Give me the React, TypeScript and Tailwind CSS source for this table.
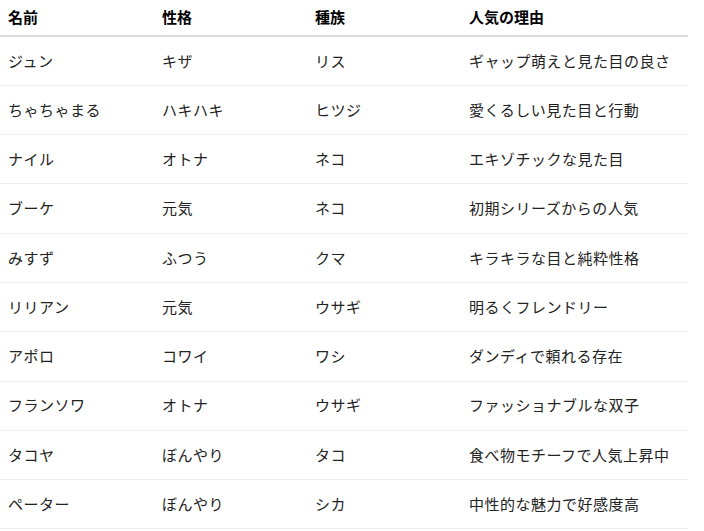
const rows = [
  ["ジュン", "キザ", "リス", "ギャップ萌えと見た目の良さ"],
  ["ちゃちゃまる", "ハキハキ", "ヒツジ", "愛くるしい見た目と行動"],
  ["ナイル", "オトナ", "ネコ", "エキゾチックな見た目"],
  ["ブーケ", "元気", "ネコ", "初期シリーズからの人気"],
  ["みすず", "ふつう", "クマ", "キラキラな目と純粋性格"],
  ["リリアン", "元気", "ウサギ", "明るくフレンドリー"],
  ["アポロ", "コワイ", "ワシ", "ダンディで頼れる存在"],
  ["フランソワ", "オトナ", "ウサギ", "ファッショナブルな双子"],
  ["タコヤ", "ぼんやり", "タコ", "食べ物モチーフで人気上昇中"],
  ["ペーター", "ぼんやり", "シカ", "中性的な魅力で好感度高"],
];

const headers = ["名前", "性格", "種族", "人気の理由"];

export default function App() {
  return (
    <div className="min-h-screen bg-white font-['Noto_Sans_CJK_JP',sans-serif] text-[#222]">
      <table className="w-[688px] table-fixed border-collapse text-left">
        <colgroup>
          <col className="w-[154px]" />
          <col className="w-[153px]" />
          <col className="w-[154px]" />
          <col className="w-[227px]" />
        </colgroup>
        <thead>
          <tr className="h-[36px] border-b-2 border-[#dcdcdc]">
            {headers.map((h) => (
              <th key={h} className="px-2 text-[15px] font-bold text-black">
                {h}
              </th>
            ))}
          </tr>
        </thead>
        <tbody>
          {rows.map((r) => (
            <tr key={r[0]} className="h-[49.3px] border-b border-[#efefef]">
              {r.map((c, i) => (
                <td key={i} className="whitespace-nowrap px-2 text-[15px] tracking-[0.5px]">
                  {c}
                </td>
              ))}
            </tr>
          ))}
        </tbody>
      </table>
    </div>
  );
}
